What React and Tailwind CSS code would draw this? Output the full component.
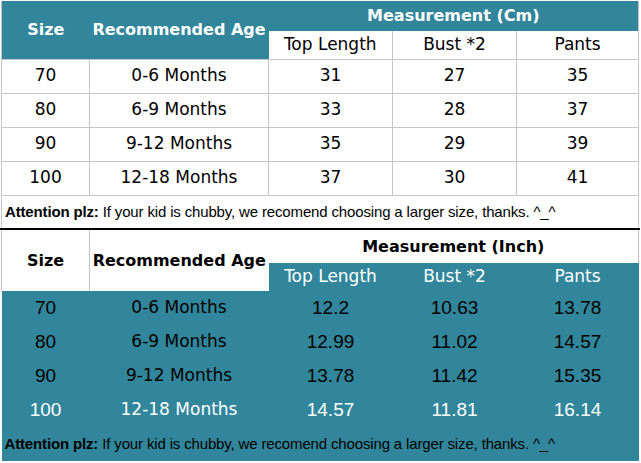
import React from 'react';

const comic = { fontFamily: '"DejaVu Sans", sans-serif' };

const cmRows = [
  ['70', '0-6 Months', '31', '27', '35'],
  ['80', '6-9 Months', '33', '28', '37'],
  ['90', '9-12 Months', '35', '29', '39'],
  ['100', '12-18 Months', '37', '30', '41'],
];

const inchRows = [
  ['70', '0-6 Months', '12.2', '10.63', '13.78'],
  ['80', '6-9 Months', '12.99', '11.02', '14.57'],
  ['90', '9-12 Months', '13.78', '11.42', '15.35'],
  ['100', '12-18 Months', '14.57', '11.81', '16.14'],
];

function Attention() {
  return (
    <span className="font-['Liberation_Sans',Arial,sans-serif] text-[15px] tracking-[-0.15px] text-black">
      <b>Attention plz:</b> If your kid is chubby, we recomend choosing a larger size, thanks. ^_^
    </span>
  );
}

function Cols() {
  return (
    <colgroup>
      <col className="w-[88px]" />
      <col className="w-[179px]" />
      <col className="w-[124px]" />
      <col className="w-[124px]" />
      <col className="w-[122px]" />
    </colgroup>
  );
}

export default function App() {
  return (
    <div className="w-[641px] h-[463px] bg-white pt-px pl-px overflow-hidden" style={comic}>
      {/* cm table */}
      <table className="w-[638px] table-fixed border-collapse text-center">
        <Cols />
        <tbody>
          <tr className="h-[30px]">
            <td rowSpan={2} className="bg-[#31869b] text-white font-bold text-[16px] border-l border-[#c6c6c6]">Size</td>
            <td rowSpan={2} className="bg-[#31869b] text-white font-bold text-[16px]">Recommended Age</td>
            <td colSpan={3} className="bg-[#31869b] text-white font-bold text-[16px] border-r border-[#c6c6c6]">Measurement (Cm)</td>
          </tr>
          <tr className="h-[28px] text-[17px] text-black">
            <td className="border-r border-b border-[#c6c6c6]">Top Length</td>
            <td className="border-r border-b border-[#c6c6c6]">Bust *2</td>
            <td className="border-r border-b border-[#c6c6c6]">Pants</td>
          </tr>
          {cmRows.map((r) => (
            <tr key={r[0]} className="h-[34px] text-[17px] text-black">
              {r.map((c, i) => (
                <td key={i} className="border border-[#c6c6c6]">{c}</td>
              ))}
            </tr>
          ))}
          <tr className="h-[33px]">
            <td colSpan={5} className="text-left pl-[3px] border-x border-[#c6c6c6]">
              <Attention />
            </td>
          </tr>
        </tbody>
      </table>

      <div className="w-[640px] h-[2px] bg-black -ml-px" />

      {/* inch table */}
      <table className="w-[638px] table-fixed border-collapse text-center">
        <Cols />
        <tbody>
          <tr className="h-[33px]">
            <td rowSpan={2} className="bg-white text-black font-bold text-[16px] border-l border-r border-[#c6c6c6]">Size</td>
            <td rowSpan={2} className="bg-white text-black font-bold text-[16px]">Recommended Age</td>
            <td colSpan={3} className="bg-white text-black font-bold text-[16px] border-r border-[#c6c6c6]">Measurement (Inch)</td>
          </tr>
          <tr className="h-[28px] bg-[#31869b] text-white text-[17px]">
            <td>Top Length</td>
            <td>Bust *2</td>
            <td>Pants</td>
          </tr>
          {inchRows.map((r, ri) => (
            <tr key={r[0]} className={`h-[34px] bg-[#31869b] ${ri === 3 ? 'text-white' : 'text-black'}`}>
              <td className="font-['Liberation_Sans',Arial,sans-serif] text-[19px]">{r[0]}</td>
              <td className="text-[17px]">{r[1]}</td>
              <td className="font-['Liberation_Sans',Arial,sans-serif] text-[19px]">{r[2]}</td>
              <td className="font-['Liberation_Sans',Arial,sans-serif] text-[19px]">{r[3]}</td>
              <td className="font-['Liberation_Sans',Arial,sans-serif] text-[19px]">{r[4]}</td>
            </tr>
          ))}
          <tr className="h-[34px] bg-[#31869b]">
            <td colSpan={5} className="text-left pl-[3px]">
              <Attention />
            </td>
          </tr>
        </tbody>
      </table>
    </div>
  );
}
